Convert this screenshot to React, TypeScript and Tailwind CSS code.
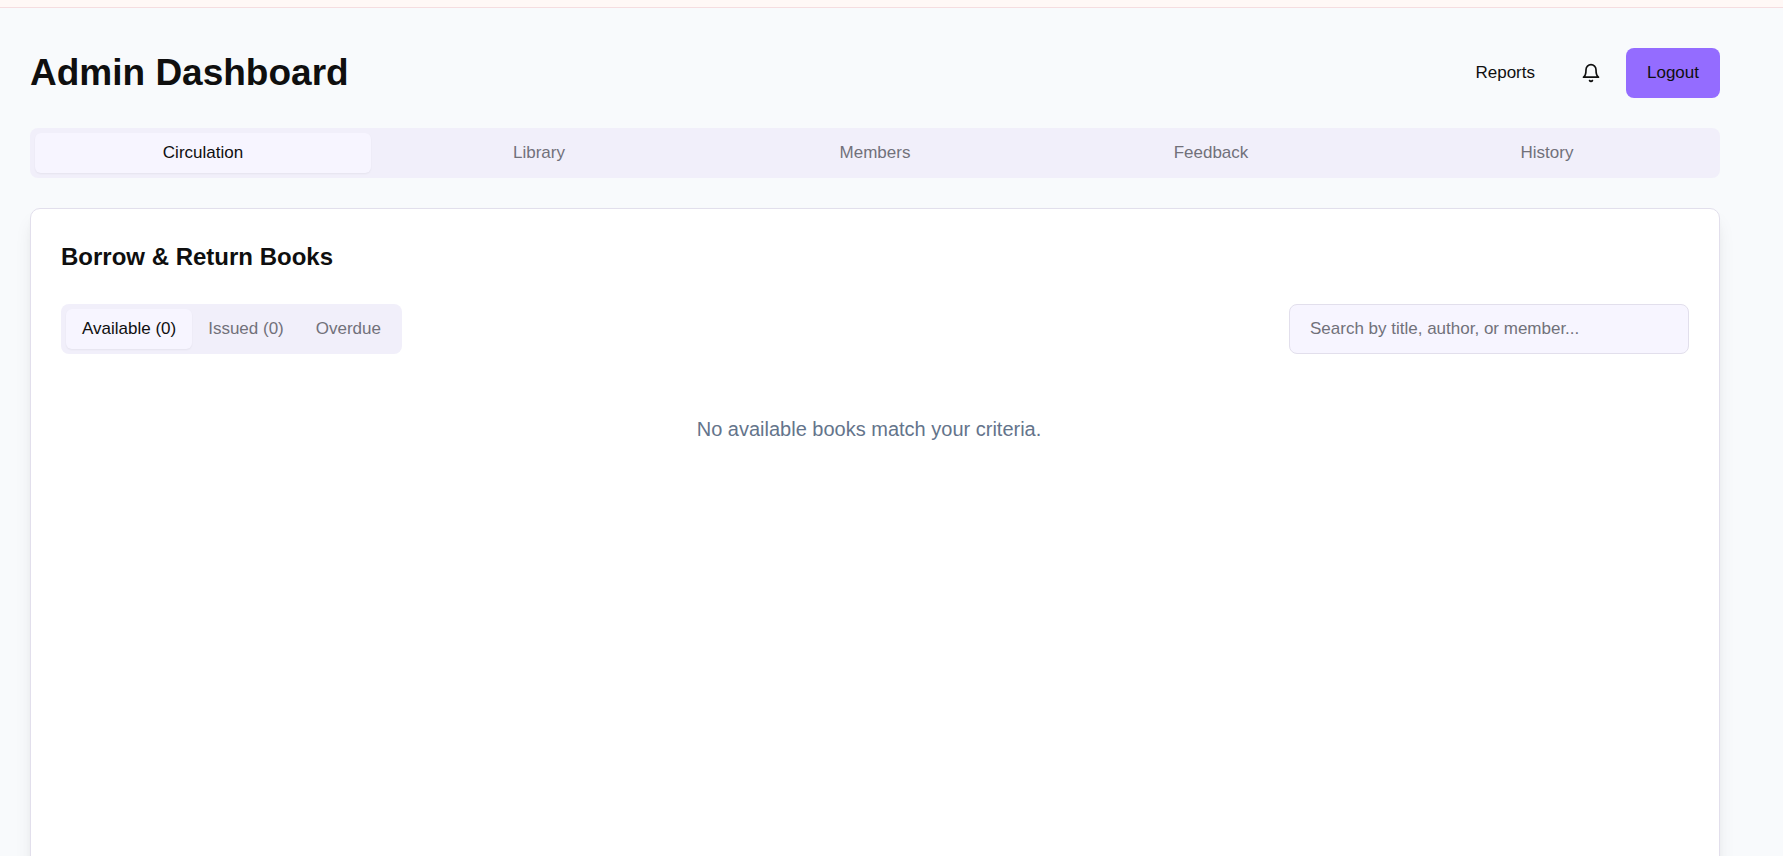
import { useState } from "react";

const sections = ["Circulation", "Library", "Members", "Feedback", "History"];
const filters = ["Available (0)", "Issued (0)", "Overdue"];

const activeTab = "bg-[#f7f5ff] text-[#0f0f0f] shadow-xs";
const idleTab = "text-[#71717a]";

function BellIcon() {
  return (
    <svg
      viewBox="0 0 24 24"
      className="size-5"
      fill="none"
      stroke="currentColor"
      strokeWidth="2"
      strokeLinecap="round"
      strokeLinejoin="round"
      aria-hidden="true"
    >
      <path d="M6 8a6 6 0 0 1 12 0c0 7 3 9 3 9H3s3-2 3-9" />
      <path d="M10.3 21a1.94 1.94 0 0 0 3.4 0" />
    </svg>
  );
}

export default function App() {
  const [section, setSection] = useState("Circulation");
  const [filter, setFilter] = useState("Available (0)");

  return (
    <div className="flex h-screen flex-col overflow-hidden bg-[#f8fafc] font-['Liberation_Sans',Arial,sans-serif] text-[17px] leading-6 text-[#0f0f0f]">
      <div className="h-2 shrink-0 border-b border-[#f5dde0] bg-[#fff8f6]" />
      <main className="w-full max-w-[1750px] px-[30px] pt-10">
        <header className="mb-[30px] flex items-center justify-between">
          <h1 className="text-[37px] leading-[50px] font-bold">Admin Dashboard</h1>
          <div className="flex items-center gap-[10px]">
            <button type="button" className="h-[50px] rounded-lg px-[21px]">
              Reports
            </button>
            <button
              type="button"
              aria-label="Notifications"
              className="flex size-[50px] items-center justify-center rounded-lg"
            >
              <BellIcon />
            </button>
            <button type="button" className="h-[50px] rounded-lg bg-[#946cff] px-[21px]">
              Logout
            </button>
          </div>
        </header>

        <nav className="mb-[30px] grid h-[50px] grid-cols-5 rounded-lg bg-[#f1effa] p-[5px]">
          {sections.map((name) => (
            <button
              key={name}
              type="button"
              onClick={() => setSection(name)}
              className={`rounded-md ${section === name ? activeTab : idleTab}`}
            >
              {name}
            </button>
          ))}
        </nav>

        <section className="min-h-[90vh] rounded-[10px] border border-[#e2dfec] bg-white p-[30px] shadow-[0_12px_19px_-4px_rgb(0_0_0/0.1),0_5px_8px_-5px_rgb(0_0_0/0.1)]">
          <h2 className="mb-[30px] text-[24px] leading-[35px] font-bold">Borrow &amp; Return Books</h2>
          <div className="flex items-center justify-between">
            <div className="flex h-[50px] rounded-lg bg-[#f1effa] p-[5px]">
              {filters.map((name) => (
                <button
                  key={name}
                  type="button"
                  onClick={() => setFilter(name)}
                  className={`rounded-md px-4 ${filter === name ? activeTab : idleTab}`}
                >
                  {name}
                </button>
              ))}
            </div>
            <input
              type="text"
              aria-label="Search books"
              placeholder="Search by title, author, or member..."
              className="h-[50px] w-[400px] rounded-lg border border-[#e2dfec] bg-[#f7f5ff] px-5 placeholder:text-[#71717a]"
            />
          </div>
          <div className="pt-[60px] pr-3">
            <p className="text-center text-[20px] leading-[30px] text-[#64748b]">
              No available books match your criteria.
            </p>
          </div>
        </section>
      </main>
    </div>
  );
}
